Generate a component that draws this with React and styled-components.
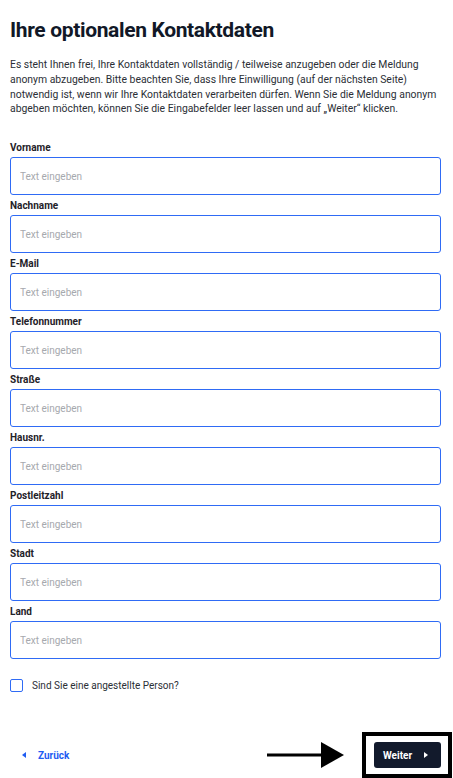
import React from "react";
import styled, { createGlobalStyle } from "styled-components";

const Global = createGlobalStyle`
  html, body { margin: 0; padding: 0; background: #fff; }
  body { font-family: Roboto, "Noto Sans", Arial, sans-serif; -webkit-font-smoothing: antialiased; }
  * { box-sizing: border-box; }
`;

const Page = styled.div`
  width: 453px;
  height: 778px;
  overflow: hidden;
  padding: 16px 12px 0 10px;
  display: flex;
  flex-direction: column;
`;

const Title = styled.h1`
  margin: 0;
  font-size: 21px;
  line-height: 28px;
  font-weight: 700;
  color: #111827;
  letter-spacing: -0.35px;
`;

const Intro = styled.p`
  margin: 14px 0 0;
  font-size: 10.4px;
  line-height: 14.8px;
  color: #2b2f36;
`;

const Form = styled.div`
  margin-top: 24px;
  display: flex;
  flex-direction: column;
  gap: 4px;
`;

const Field = styled.label`
  display: flex;
  flex-direction: column;
`;

const Label = styled.span`
  font-size: 10px;
  line-height: 14px;
  font-weight: 700;
  color: #1f2229;
  margin-bottom: 2px;
`;

const Input = styled.input`
  height: 38px;
  width: 100%;
  border: 1px solid #2f6bf5;
  border-radius: 3px;
  padding: 0 9px;
  font-family: inherit;
  font-size: 10px;
  color: #222;
  outline: none;
  &::placeholder { color: #a6a9ae; }
`;

const CheckRow = styled.label`
  margin-top: 20px;
  display: flex;
  align-items: center;
  gap: 9px;
  font-size: 10px;
  color: #2b2f36;
  height: 13px;
`;

const Box = styled.span`
  width: 13px;
  height: 13px;
  border: 1.5px solid #2f6bf5;
  border-radius: 2px;
  flex-shrink: 0;
`;

const Footer = styled.div`
  margin-top: 40px;
  display: flex;
  align-items: center;
`;

const BackLink = styled.a`
  display: flex;
  align-items: center;
  gap: 12px;
  padding-left: 12px;
  font-size: 10px;
  font-weight: 700;
  color: #1f5cf2;
  text-decoration: none;
`;

const Spacer = styled.div`
  flex: 1;
`;

const Arrow = styled.svg`
  display: block;
  margin-right: 18px;
`;

const Frame = styled.div`
  border: 4px solid #000;
  padding: 6px 7px 6px 8px;
  margin-right: -11px;
`;

const PrimaryButton = styled.button`
  height: 26px;
  width: 67px;
  border: none;
  border-radius: 3px;
  background: #121a2c;
  color: #fff;
  font-family: inherit;
  font-size: 10px;
  font-weight: 700;
  display: flex;
  align-items: center;
  padding: 0 13px 0 9px;
  justify-content: space-between;
`;

const Caret = ({ dir, color }) => (
  <svg width="4" height="6" viewBox="0 0 4 6">
    {dir === "left" ? (
      <path d="M4 0 L0 3 L4 6 Z" fill={color} />
    ) : (
      <path d="M0 0 L4 3 L0 6 Z" fill={color} />
    )}
  </svg>
);

const fields = [
  "Vorname",
  "Nachname",
  "E-Mail",
  "Telefonnummer",
  "Straße",
  "Hausnr.",
  "Postleitzahl",
  "Stadt",
  "Land",
];

export default function App() {
  return (
    <>
      <Global />
      <Page>
        <Title>Ihre optionalen Kontaktdaten</Title>
        <Intro>
          Es steht Ihnen frei, Ihre Kontaktdaten vollständig / teilweise anzugeben oder die Meldung
          anonym abzugeben. Bitte beachten Sie, dass Ihre Einwilligung (auf der nächsten Seite)
          notwendig ist, wenn wir Ihre Kontaktdaten verarbeiten dürfen. Wenn Sie die Meldung anonym
          abgeben möchten, können Sie die Eingabefelder leer lassen und auf „Weiter“ klicken.
        </Intro>
        <Form>
          {fields.map((f) => (
            <Field key={f}>
              <Label>{f}</Label>
              <Input placeholder="Text eingeben" />
            </Field>
          ))}
        </Form>
        <CheckRow>
          <Box />
          Sind Sie eine angestellte Person?
        </CheckRow>
        <Footer>
          <BackLink href="#">
            <Caret dir="left" color="#1f5cf2" />
            Zurück
          </BackLink>
          <Spacer />
          <Arrow width="77" height="26" viewBox="0 0 77 26">
            <rect x="0" y="11.5" width="56" height="3" fill="#000" />
            <path d="M54 0 L77 13 L54 26 Z" fill="#000" />
          </Arrow>
          <Frame>
            <PrimaryButton>
              Weiter
              <Caret dir="right" color="#fff" />
            </PrimaryButton>
          </Frame>
        </Footer>
      </Page>
    </>
  );
}
